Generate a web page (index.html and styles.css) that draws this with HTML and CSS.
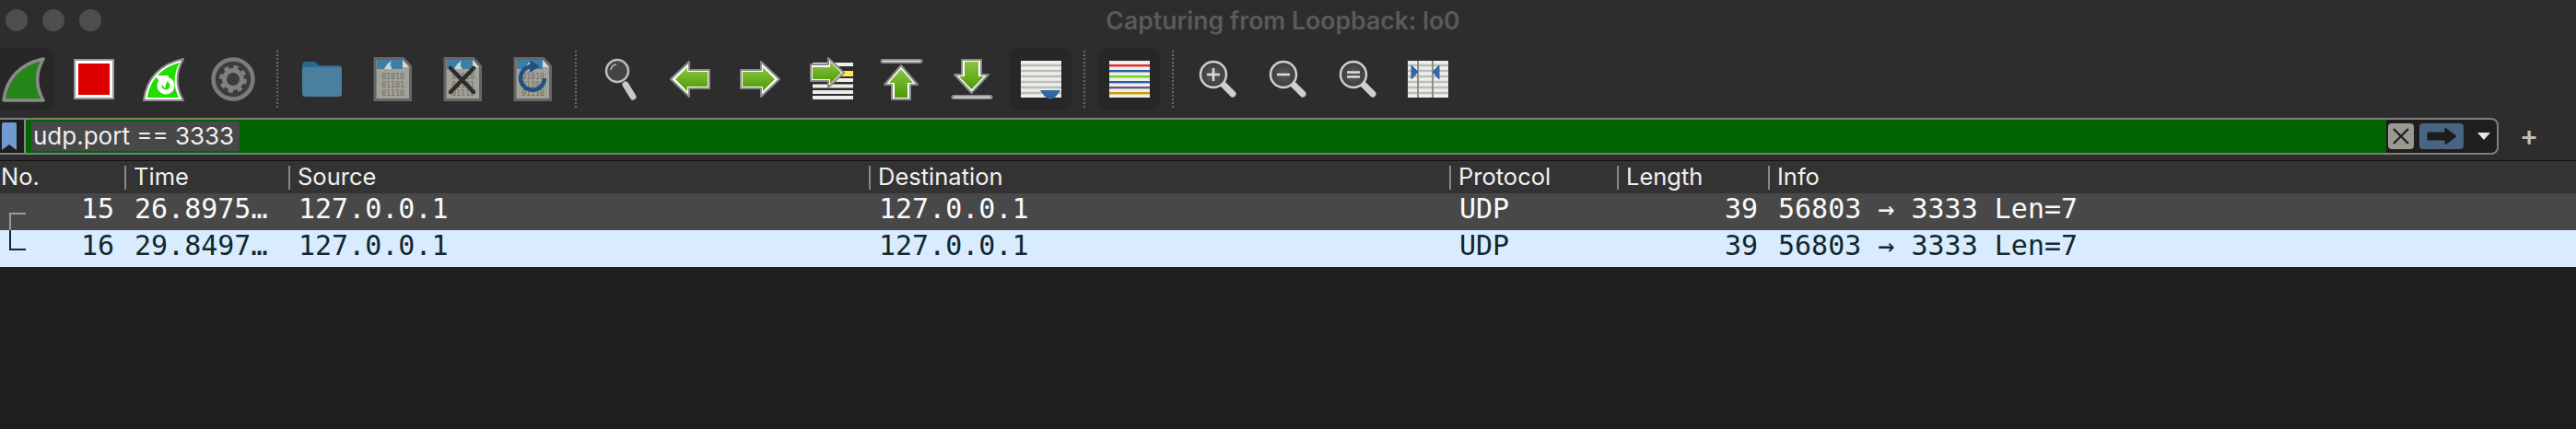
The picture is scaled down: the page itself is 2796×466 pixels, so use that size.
FILE: index.html
```html
<!DOCTYPE html>
<html>
  <head>
    <meta name="viewport" content="width=device-width, initial-scale=1">
    <link rel="stylesheet" href="styles.css">
  </head>
  <body>
    <svg class="defs" width="0" height="0">
      <defs>
        <linearGradient id="green" x1="0" y1="0" x2="0" y2="1">
          <stop offset="0" stop-color="#8ac640"/>
          <stop offset="1" stop-color="#4e9a06"/>
        </linearGradient>
        <radialGradient id="lens">
          <stop offset="0" stop-color="#5a5a5a"/>
          <stop offset="1" stop-color="#3c3c3c"/>
        </radialGradient>
        <symbol id="file" viewBox="0 0 48 48" overflow="visible">
          <path d="M6 1.500H37L44.500 10V46.500H6Z" fill="#a2a298" stroke="#666" stroke-width="3"/>
          <path d="M8 3H36V13H8Z" fill="#3d7ea6"/>
          <path d="M16 13C18 9 20 6 24 4C22 8 23 10 25 13Z" fill="#c8d4da"/>
          <path d="M36 3L43 11H36Z" fill="#d8d8d0"/>
          <text x="25.500" y="24" class="bits">01010</text>
          <text x="25.500" y="33" class="bits">01101</text>
          <text x="25.500" y="42" class="bits">01110</text>
        </symbol>
        <symbol id="lines" viewBox="0 0 48 48" overflow="visible">
          <rect x="3" y="4" width="44" height="40" fill="#eeeeec"/>
          <path d="M3 9H47M3 15H47M3 21H47M3 27H47M3 33H47M3 39H47" stroke="#babdb6" stroke-width="2.400"/>
        </symbol>
      </defs>
    </svg>

    <div class="titlebar">
      <div class="lights"><span></span><span></span><span></span></div>
      <div class="title">Capturing from Loopback: lo0</div>
    </div>

    <div class="toolbar">
      <div class="btn active">
        <svg class="icon" viewBox="0 0 48 48"><path d="M3 47C6 22 22 7 46 2C37 18 38 33 46 47Z" fill="#268518" stroke="#8a8a8a" stroke-width="3.500" stroke-linejoin="round"/></svg>
      </div>
      <div class="btn">
        <svg class="icon" viewBox="0 0 48 48"><rect x="3" y="2" width="44" height="44" fill="#9a9a9a"/><rect x="5" y="4" width="40" height="40" fill="#fff"/><rect x="8" y="7" width="34" height="34" fill="#dd0000"/></svg>
      </div>
      <div class="btn">
        <svg class="icon" viewBox="0 0 48 48">
          <path d="M3 47C6 22 22 7 46 2C37 18 38 33 46 47Z" fill="#fff" stroke="#8a8a8a" stroke-width="2" stroke-linejoin="round"/>
          <path d="M7 44C10 24 23 11 42 6C35 19 35 32 41 44Z" fill="#22dd00"/>
          <circle cx="27" cy="31" r="7" fill="none" stroke="#fff" stroke-width="5"/>
          <path d="M15 20L30 20L26 34Z" fill="#fff"/>
        </svg>
      </div>
      <div class="btn">
        <svg class="icon" viewBox="0 0 48 48">
          <circle cx="24" cy="24" r="21.500" fill="#3c3c3c" stroke="#7c7c7c" stroke-width="4.500"/>
          <circle cx="24" cy="24" r="9.500" fill="none" stroke="#808080" stroke-width="5"/>
          <circle cx="24" cy="24" r="13" fill="none" stroke="#808080" stroke-width="4" stroke-dasharray="5.200 5"/>
        </svg>
      </div>
      <div class="sep"></div>
      <div class="btn">
        <svg class="icon" viewBox="0 0 48 48">
          <path d="M3 10Q3 5 7 5H17L21 9H43Q46 9 46 12V20H3Z" fill="#2a6a92"/>
          <rect x="3" y="11" width="43" height="32" rx="3" fill="#4a7f9f"/>
        </svg>
      </div>
      <div class="btn">
        <svg class="icon"><use href="#file" width="48" height="48"/></svg>
      </div>
      <div class="btn">
        <svg class="icon" viewBox="0 0 48 48">
          <use href="#file" width="48" height="48"/>
          <path d="M12 12L37 38M37 12L12 38" stroke="#2d2d2d" stroke-width="4.500" stroke-linecap="round"/>
        </svg>
      </div>
      <div class="btn">
        <svg class="icon" viewBox="0 0 48 48">
          <use href="#file" width="48" height="48"/>
          <path d="M23 10A13 13 0 1 0 38 23" fill="none" stroke="#23507f" stroke-width="4.500"/>
          <path d="M22 3L33 10L22 17Z" fill="#23507f"/>
        </svg>
      </div>
      <div class="sep"></div>
      <div class="btn">
        <svg class="icon" viewBox="0 0 48 48">
          <path d="M30 30L38 43" stroke="#c8c8c8" stroke-width="7" stroke-linecap="round"/>
          <circle cx="21" cy="15" r="12" fill="#454545" stroke="#bdbdbd" stroke-width="2.500"/>
          <path d="M14 14A7 7 0 0 1 20 8" fill="none" stroke="#bbb" stroke-width="1.500"/>
        </svg>
      </div>
      <div class="btn">
        <svg class="icon" viewBox="0 0 48 48"><path d="M3 24L23 5V14H45V34H23V43Z" fill="#fff" stroke="#8a8a8a" stroke-width="2" stroke-linejoin="round"/><path d="M8 24L21 11V16H43V32H21V37Z" fill="url(#green)"/></svg>
      </div>
      <div class="btn">
        <svg class="icon" viewBox="0 0 48 48"><path d="M45 24L25 5V14H3V34H25V43Z" fill="#fff" stroke="#8a8a8a" stroke-width="2" stroke-linejoin="round"/><path d="M40 24L27 11V16H5V32H27V37Z" fill="url(#green)"/></svg>
      </div>
      <div class="btn">
        <svg class="icon" viewBox="0 0 48 48">
          <path d="M5 8H49M5 25H49M5 31.500H49M5 38H49M5 44H49" stroke="#eeeeec" stroke-width="4"/>
          <rect x="28" y="15" width="21" height="6" fill="#fce94f"/>
          <path d="M39 17L22 1V8H3V26H22V33Z" fill="#fff" stroke="#8a8a8a" stroke-width="2" stroke-linejoin="round"/>
          <path d="M36 17L24 5V11H5V24H24V29Z" fill="url(#green)"/>
        </svg>
      </div>
      <div class="btn">
        <svg class="icon" viewBox="0 0 48 48">
          <path d="M5 4.500H46" stroke="#8a8a8a" stroke-width="5" stroke-linecap="round"/>
          <path d="M5 4.500H46" stroke="#ddd" stroke-width="1.500"/>
          <path d="M25 9L43 30H35V46H15V30H7Z" fill="#fff" stroke="#8a8a8a" stroke-width="2" stroke-linejoin="round"/>
          <path d="M25 13L38 28H32V44H18V28H12Z" fill="url(#green)"/>
        </svg>
      </div>
      <div class="btn">
        <svg class="icon" viewBox="0 0 48 48">
          <path d="M6 43.500H46" stroke="#8a8a8a" stroke-width="5" stroke-linecap="round"/>
          <path d="M6 43.500H46" stroke="#ddd" stroke-width="1.500"/>
          <path d="M15 3H36V19H44L25.500 39L7 19H15Z" fill="#fff" stroke="#8a8a8a" stroke-width="2" stroke-linejoin="round"/>
          <path d="M18 5H33V21H39L25.500 35L12 21H18Z" fill="url(#green)"/>
        </svg>
      </div>
      <div class="btn active">
        <svg class="icon" viewBox="0 0 48 48">
          <use href="#lines" width="48" height="48"/>
          <path d="M24 36H46L41 43L35 46L29 43Z" fill="#3465a4"/>
        </svg>
      </div>
      <div class="sep"></div>
      <div class="btn active">
        <svg class="icon" viewBox="0 0 48 48">
          <rect x="3" y="4" width="44" height="40" fill="#eeeeec"/>
          <rect x="3" y="8" width="44" height="2.400" fill="#e02a2a"/>
          <rect x="3" y="14" width="44" height="2.400" fill="#2a5fa0"/>
          <rect x="3" y="20" width="44" height="2.400" fill="#73d216"/>
          <rect x="3" y="26" width="44" height="2.400" fill="#2a5fa0"/>
          <rect x="3" y="32" width="44" height="2.400" fill="#75507b"/>
          <rect x="3" y="38" width="44" height="2.400" fill="#c4a000"/>
        </svg>
      </div>
      <div class="sep"></div>
      <div class="btn">
        <svg class="icon" viewBox="0 0 48 48">
          <path d="M31 30L41 40" stroke="#cfcfcf" stroke-width="7" stroke-linecap="round"/>
          <circle cx="20" cy="19" r="14" fill="url(#lens)" stroke="#cfcfcf" stroke-width="2.500"/>
          <path d="M13 19H27M20 12V26" stroke="#dcdcdc" stroke-width="2.500"/>
        </svg>
      </div>
      <div class="btn">
        <svg class="icon" viewBox="0 0 48 48">
          <path d="M31 30L41 40" stroke="#cfcfcf" stroke-width="7" stroke-linecap="round"/>
          <circle cx="20" cy="19" r="14" fill="url(#lens)" stroke="#cfcfcf" stroke-width="2.500"/>
          <path d="M13 19H27" stroke="#dcdcdc" stroke-width="2.500"/>
        </svg>
      </div>
      <div class="btn">
        <svg class="icon" viewBox="0 0 48 48">
          <path d="M31 30L41 40" stroke="#cfcfcf" stroke-width="7" stroke-linecap="round"/>
          <circle cx="20" cy="19" r="14" fill="url(#lens)" stroke="#cfcfcf" stroke-width="2.500"/>
          <path d="M13 16.500H27M13 21.500H27" stroke="#dcdcdc" stroke-width="2.500"/>
        </svg>
      </div>
      <div class="btn">
        <svg class="icon" viewBox="0 0 48 48">
          <use href="#lines" width="48" height="48"/>
          <path d="M14 4V44M30 4V44" stroke="#8c8c88" stroke-width="2"/>
          <path d="M7 9L14 16L7 24Z M37 9L30 16L37 24Z" fill="#3465a4" stroke="#3465a4" stroke-linejoin="round"/>
        </svg>
      </div>
    </div>

    <div class="filterbar">
      <div class="filter">
        <div class="bookmark">
          <svg width="16" height="30" viewBox="0 0 16 30"><path d="M0 2Q0 0 2 0H14Q16 0 16 2V30L8 24L0 30Z" fill="#6f9bd1"/></svg>
        </div>
        <div class="expr"><span>udp.port == 3333</span></div>
        <div class="actions">
          <div class="clear">
            <svg width="18" height="18" viewBox="0 0 18 18"><path d="M1 1L17 17M17 1L1 17" stroke="#222" stroke-width="2.400"/></svg>
          </div>
          <div class="apply">
            <svg width="32" height="18" viewBox="0 0 32 18"><path d="M1 5H20V0L32 9L20 18V13H1Z" fill="#1c1c1c" stroke="#1c1c1c" stroke-linejoin="round"/></svg>
          </div>
          <div class="caret"></div>
        </div>
      </div>
      <div class="plus">+</div>
    </div>

    <div class="packets">
      <div class="row head">
        <div class="cell">No.</div>
        <div class="cell">Time</div>
        <div class="cell">Source</div>
        <div class="cell">Destination</div>
        <div class="cell">Protocol</div>
        <div class="cell">Length</div>
        <div class="cell">Info</div>
      </div>
      <div class="row sel-related">
        <div class="cell no"><span class="tree first"></span>15</div>
        <div class="cell">26.8975…</div>
        <div class="cell">127.0.0.1</div>
        <div class="cell">127.0.0.1</div>
        <div class="cell">UDP</div>
        <div class="cell len">39</div>
        <div class="cell">56803 → 3333 Len=7</div>
      </div>
      <div class="row selected">
        <div class="cell no"><span class="tree last"></span>16</div>
        <div class="cell">29.8497…</div>
        <div class="cell">127.0.0.1</div>
        <div class="cell">127.0.0.1</div>
        <div class="cell">UDP</div>
        <div class="cell len">39</div>
        <div class="cell">56803 → 3333 Len=7</div>
      </div>
    </div>
  </body>
</html>
```
FILE: styles.css
```css
html, body { margin: 0; padding: 0; }
body { background: #1e1e1e; height: 466px; overflow: hidden; font-family: Inter, "Liberation Sans", sans-serif; }
.defs { display: block; height: 0; }
.bits { font-family: "DejaVu Sans Mono", monospace; font-size: 8.200px; fill: #6e6e68; text-anchor: middle; }

.titlebar { height: 44px; background: #2d2d2d; display: flex; align-items: center; padding-left: 6px; }
.lights { display: flex; gap: 16px; }
.lights span { width: 24px; height: 24px; border-radius: 50%; background: #4e4e4e; }
.title { flex: 1; text-align: center; padding-right: 121px; font-size: 26.600px; font-weight: 600; color: #5a5a5a; }

.toolbar { height: 84px; background: #2d2d2d; display: flex; align-items: center; gap: 8px; overflow: hidden; }
.btn { flex: none; width: 68px; height: 68px; display: flex; align-items: center; justify-content: center; border-radius: 10px; }
.btn:first-child { margin-left: -9px; }
.btn.active { background: #272727; }
.icon { width: 48px; height: 48px; overflow: visible; }
.sep { flex: none; width: 12px; height: 62px; display: flex; justify-content: center; }
.sep::before { content: ""; width: 0; border-left: 2px dotted #6a6a6a; }

.filterbar { height: 46px; background: #2d2d2d; display: flex; align-items: flex-start; }
.filter { box-sizing: border-box; width: 2712px; height: 40px; border: 2px solid #7f7f7f; border-left: none; border-radius: 0 8px 8px 0; display: flex; background: #1e1e1e; overflow: hidden; }
.bookmark { width: 28px; padding: 3px 0 0 2px; box-sizing: border-box; border-right: 2px solid #888; flex: none; }
.expr { flex: 1; background: #006400; padding: 2px 0 0 6px; }
.expr span { display: inline-block; height: 32px; line-height: 31px; padding: 0 6px 0 2px; background: #484848; color: #f0f0f0; font-size: 26px; }
.actions { width: 120px; flex: none; display: flex; align-items: center; padding-left: 2px; box-sizing: border-box; gap: 6px; }
.clear { width: 28px; height: 28px; border-radius: 4px; background: #9a9a90; display: flex; align-items: center; justify-content: center; }
.apply { width: 48px; height: 28px; border-radius: 4px; background: #4a6484; display: flex; align-items: center; justify-content: center; }
.caret { margin-left: 9px; border-left: 7px solid transparent; border-right: 7px solid transparent; border-top: 8px solid #e8e8e8; }
.plus { flex: 1; text-align: center; color: #bdbdbd; font-size: 30px; line-height: 38px; font-weight: 600; padding-right: 18px; }

.packets { border-top: 1px solid #111; }
.row { display: grid; grid-template-columns: 135px 178px 630px 630px 182px 164px 1fr; height: 40px; align-items: start; font-family: "DejaVu Sans Mono", monospace; font-size: 30px; line-height: 34px; white-space: nowrap; }
.cell { padding-left: 11px; }
.cell:first-child { padding-left: 0; }
.head { height: 35px; align-items: center; background: #333333; color: #f0f0f0; font-family: Inter, "Liberation Sans", sans-serif; font-size: 25.500px; }
.head .cell { height: 26px; line-height: 23px; border-left: 2px solid #888; padding-left: 8px; }
.head .cell:first-child { border-left: none; padding-left: 1px; }
.sel-related { background: #484848; color: #fafafa; }
.selected { background: #d9ecff; color: #12272e; }
.no { display: flex; justify-content: space-between; padding-right: 11px; height: 40px; }
.len { text-align: right; padding-right: 11px; }
.tree { box-sizing: border-box; width: 18px; margin-left: 10px; border-left: 2px solid; }
.tree.first { height: 19px; align-self: flex-end; border-top: 2px solid #999; border-left-color: #999; }
.tree.last { height: 22px; align-self: flex-start; border-bottom: 2px solid #12272e; }
```
